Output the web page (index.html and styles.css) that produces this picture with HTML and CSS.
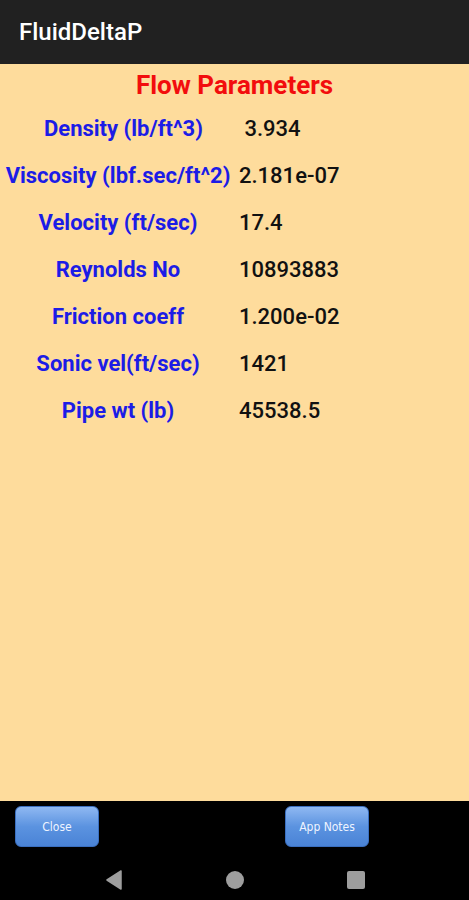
FILE: index.html
```html
<!DOCTYPE html>
<html lang="en">
<head>
  <meta charset="UTF-8">
  <meta name="viewport" content="width=device-width, initial-scale=1.0">
  <title>FluidDeltaP</title>
  <link rel="stylesheet" href="styles.css">
</head>
<body>
  <div class="screen">
    <header class="appbar">FluidDeltaP</header>

    <main class="content">
      <h1 class="title">Flow Parameters</h1>
      <div class="params">
        <div class="label">&nbsp;&nbsp;Density (lb/ft^3)</div>
        <div class="value">&nbsp;3.934</div>

        <div class="label">Viscosity (lbf.sec/ft^2)</div>
        <div class="value">2.181e-07</div>

        <div class="label">Velocity (ft/sec)</div>
        <div class="value">17.4</div>

        <div class="label">Reynolds No</div>
        <div class="value">10893883</div>

        <div class="label">Friction coeff</div>
        <div class="value">1.200e-02</div>

        <div class="label">Sonic vel(ft/sec)</div>
        <div class="value">1421</div>

        <div class="label">Pipe wt (lb)</div>
        <div class="value">45538.5</div>
      </div>
    </main>

    <div class="button-bar">
      <button class="btn">Close</button>
      <button class="btn">App Notes</button>
    </div>

    <nav class="navbar">
      <svg width="20" height="20" viewBox="0 0 20 20"><path d="M17 1 L17 19 L3 10 Z" fill="#9e9e9e" stroke="#9e9e9e" stroke-width="1.5" stroke-linejoin="round"/></svg>
      <svg width="20" height="20" viewBox="0 0 20 20"><circle cx="10" cy="10" r="9" fill="#9e9e9e"/></svg>
      <svg width="20" height="20" viewBox="0 0 20 20"><rect x="1" y="1" width="18" height="18" rx="2" fill="#9e9e9e"/></svg>
    </nav>
  </div>
</body>
</html>
```

FILE: styles.css
```css
body {
  margin: 0;
  font-family: Roboto, 'Noto Sans', sans-serif;
  background: #000;
}

.screen {
  display: flex;
  flex-direction: column;
  width: 469px;
  height: 900px;
}

.appbar {
  height: 64px;
  flex-shrink: 0;
  background: #212121;
  color: #fff;
  font-size: 24px;
  font-weight: 500;
  display: flex;
  align-items: center;
  padding-left: 19px;
  box-sizing: border-box;
}

.content {
  flex: 1;
  background: #fedc9c;
}

.title {
  margin: 0;
  height: 41px;
  line-height: 42px;
  text-align: center;
  color: #f20d0d;
  font-size: 26px;
  font-weight: 700;
}

.params {
  display: grid;
  grid-template-columns: 236px 1fr;
  grid-auto-rows: 47px;
  column-gap: 3px;
  align-items: center;
}

.label {
  text-align: center;
  color: #1c1ce6;
  font-size: 22px;
  font-weight: 700;
  white-space: nowrap;
}

.value {
  color: #111;
  font-size: 22px;
  font-weight: 500;
}

.button-bar {
  height: 54px;
  flex-shrink: 0;
  display: flex;
  align-items: flex-start;
  padding: 5px 0 0 15px;
  gap: 186px;
  box-sizing: border-box;
}

.btn {
  width: 84px;
  height: 41px;
  border: 1px solid #3a6fc0;
  border-radius: 6px;
  background: linear-gradient(#8fb8f2, #5b93e0 50%, #4a83d6);
  color: #eef4ff;
  font-family: 'DejaVu Sans Condensed', 'DejaVu Sans', sans-serif;
  font-size: 12px;
  padding: 0;
}

.navbar {
  height: 45px;
  flex-shrink: 0;
  display: flex;
  justify-content: center;
  align-items: center;
  gap: 101px;
  padding-top: 5px;
  box-sizing: border-box;
}
```
